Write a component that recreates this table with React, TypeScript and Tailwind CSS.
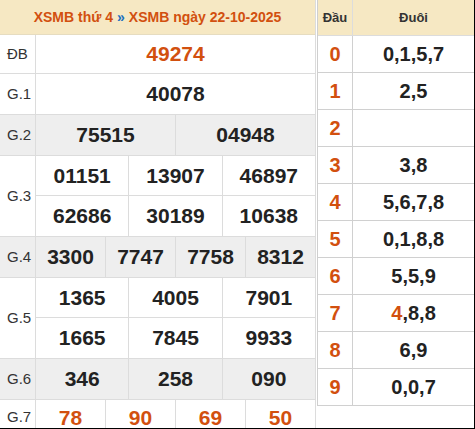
const ORANGE = "text-[#d2500f]";

type Row = {
  label: string;
  gray?: boolean;
  h: string;
  lines: string[][];
  red?: boolean;
};

const rows: Row[] = [
  { label: "ĐB", h: "h-[38px]", lines: [["49274"]], red: true },
  { label: "G.1", h: "h-[40px]", lines: [["40078"]] },
  { label: "G.2", h: "h-[40px]", gray: true, lines: [["75515", "04948"]] },
  {
    label: "G.3",
    h: "h-[40px]",
    lines: [
      ["01151", "13907", "46897"],
      ["62686", "30189", "10638"],
    ],
  },
  { label: "G.4", h: "h-[40px]", gray: true, lines: [["3300", "7747", "7758", "8312"]] },
  {
    label: "G.5",
    h: "h-[40px]",
    lines: [
      ["1365", "4005", "7901"],
      ["1665", "7845", "9933"],
    ],
  },
  { label: "G.6", h: "h-[40px]", gray: true, lines: [["346", "258", "090"]] },
  { label: "G.7", h: "h-[35px]", lines: [["78", "90", "69", "50"]], red: true },
];

const loto: [string, string[]][] = [
  ["0", ["0", "1", "5", "7"]],
  ["1", ["2", "5"]],
  ["2", []],
  ["3", ["3", "8"]],
  ["4", ["5", "6", "7", "8"]],
  ["5", ["0", "1", "8", "8"]],
  ["6", ["5", "5", "9"]],
  ["7", ["4", "8", "8"]],
  ["8", ["6", "9"]],
  ["9", ["0", "0", "7"]],
];

function PrizeRow({ row }: { row: Row }) {
  return (
    <div className={`flex border-b border-[#dcdcdc] ${row.gray ? "bg-[#eeeeee]" : "bg-white"}`}>
      <div className="w-[36px] shrink-0 flex items-center pl-[7px] border-r border-[#dcdcdc] text-[15px] text-[#333]">
        {row.label}
      </div>
      <div className="flex-1 flex flex-col">
        {row.lines.map((line, i) => (
          <div
            key={i}
            className={`flex ${row.h} ${i < row.lines.length - 1 ? "border-b border-[#dcdcdc]" : ""}`}
          >
            {line.map((n, j) => (
              <div
                key={j}
                className={`flex-1 flex items-center justify-center text-[21px] font-bold ${
                  row.red ? ORANGE : "text-[#222]"
                } ${j < line.length - 1 ? "border-r border-[#dcdcdc]" : ""}`}
              >
                {n}
              </div>
            ))}
          </div>
        ))}
      </div>
    </div>
  );
}

export default function App() {
  return (
    <div
      className="w-[475px] h-[429px] flex bg-white border-r border-b border-black overflow-hidden"
      style={{ fontFamily: "'Liberation Sans', Arial, sans-serif" }}
    >
      {/* Bảng kết quả */}
      <div className="w-[316px] shrink-0 flex flex-col border-r border-[#dcdcdc]">
        <div className="h-[35px] shrink-0 flex items-center justify-center bg-[#f6e8c3] text-[14px] font-bold border-b border-[#e6dcc0]">
          <span className={ORANGE}>XSMB thứ 4</span>
          <span className="text-[#1a6fc0] mx-[4px]">»</span>
          <span className={ORANGE}>XSMB ngày 22-10-2025</span>
        </div>
        {rows.map((r) => (
          <PrizeRow key={r.label} row={r} />
        ))}
      </div>

      {/* Bảng loto đầu đuôi */}
      <div className="ml-[1px] flex-1 self-start flex flex-col border-l border-[#cfcfcf]">
        <div className="h-[36px] flex bg-[#f6e8c3] text-[13px] font-bold text-[#333] border-b border-[#dcdcdc]">
          <div className="w-[35px] flex items-center justify-center border-r border-[#dcdcdc]">Đầu</div>
          <div className="flex-1 flex items-center justify-center">Đuôi</div>
        </div>
        {loto.map(([d, tails]) => (
          <div key={d} className="h-[37px] flex border-b border-[#d0d0d0] text-[20px] font-bold">
            <div className={`w-[35px] flex items-center justify-center border-r border-[#d0d0d0] ${ORANGE}`}>{d}</div>
            <div className="flex-1 flex items-center justify-center text-[#222]">
              {tails.map((t, i) => (
                <span key={i}>
                  <span className={d === "7" && i === 0 ? ORANGE : ""}>{t}</span>
                  {i < tails.length - 1 ? "," : ""}
                </span>
              ))}
            </div>
          </div>
        ))}
      </div>
    </div>
  );
}
